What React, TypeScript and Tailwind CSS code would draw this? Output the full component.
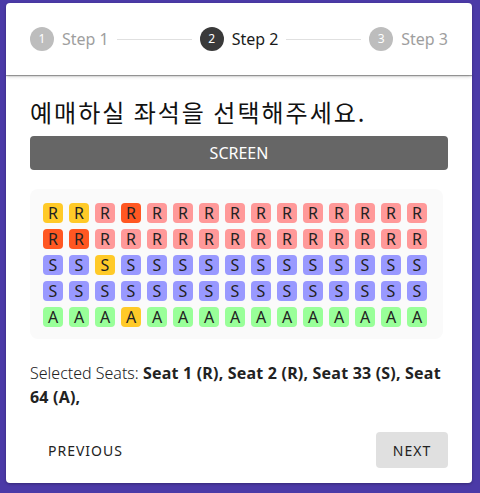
import React from "react";

const COLORS: Record<string, string> = {
  R: "bg-[#ff9999]",
  S: "bg-[#9999ff]",
  A: "bg-[#99ff99]",
};

const selected = new Set([1, 2, 33, 64]);
const reserved = new Set([4, 16, 17]);
const rowTypes = ["R", "R", "S", "S", "A"];

function seatClass(n: number, t: string) {
  if (selected.has(n)) return "bg-[#ffca28]";
  if (reserved.has(n)) return "bg-[#ff5722]";
  return COLORS[t];
}

function StepIcon({ n, active }: { n: number; active: boolean }) {
  return (
    <div
      className={`w-6 h-6 rounded-full flex items-center justify-center text-[12px] text-white ${
        active ? "bg-[#3a3a3a]" : "bg-[#bdbdbd]"
      }`}
    >
      {n}
    </div>
  );
}

export default function App() {
  const font = { fontFamily: '"Noto Sans", "Noto Sans CJK KR", sans-serif' };
  return (
    <div className="w-[480px] h-[493px] bg-[#4b3aa7] pt-[3px] pl-[6px]" style={font}>
      <div className="bg-white rounded-[4px] w-[466px] h-[480px] flex flex-col overflow-hidden shadow-[0_1px_3px_rgba(0,0,0,0.3)]">
        <div className="h-[72px] px-6 flex items-center relative z-10 shadow-[0_1px_1px_rgba(0,0,0,0.35),0_3px_3px_-1px_rgba(0,0,0,0.15)]">
          <div className="flex items-center">
            <StepIcon n={1} active={false} />
            <span className="ml-2 text-[16px] text-[#9e9e9e]">Step 1</span>
          </div>
          <div className="flex-1 mx-2 h-px bg-[#e0e0e0]" />
          <div className="flex items-center">
            <StepIcon n={2} active />
            <span className="ml-2 text-[16px] text-[#1a1a1a]">Step 2</span>
          </div>
          <div className="flex-1 mx-2 h-px bg-[#e0e0e0]" />
          <div className="flex items-center">
            <StepIcon n={3} active={false} />
            <span className="ml-2 text-[16px] text-[#9e9e9e]">Step 3</span>
          </div>
        </div>

        <div className="px-6 pt-[21px] flex flex-col">
          <h1
            className="text-[24px] leading-[32px] tracking-[2px] text-[#111]"
            style={{ fontFamily: '"Noto Sans CJK KR", "Noto Sans", sans-serif' }}
          >
            예매하실 좌석을 선택해주세요.
          </h1>
          <div className="mt-2 h-[34px] bg-[#666666] rounded-[4px] flex items-center justify-center text-white text-[16px]">
            SCREEN
          </div>

          <div className="mt-[19px] w-[413px] bg-[#fafafa] rounded-[8px] pl-[13px] pt-[14px] pb-[12px] flex flex-col gap-[6px]">
            {rowTypes.map((t, r) => (
              <div key={r} className="flex gap-[6px]">
                {Array.from({ length: 15 }, (_, i) => {
                  const n = r * 15 + i + 1;
                  return (
                    <div
                      key={i}
                      className={`w-5 h-5 rounded-[4px] flex items-center justify-center text-[16px] leading-none text-[#222] ${seatClass(n, t)}`}
                    >
                      {t}
                    </div>
                  );
                })}
              </div>
            ))}
          </div>

          <p className="mt-[22px] text-[16px] leading-[24px] text-[#222]">
            <span className="font-light">Selected Seats:</span>{" "}
            <span className="font-bold tracking-[0.2px]">Seat 1 (R), Seat 2 (R), Seat 33 (S), Seat 64 (A),</span>
          </p>

          <div className="mt-[23px] flex justify-between items-center">
            <button className="h-9 pl-[18px] pr-4 text-[14px] tracking-[0.07em] text-[#222] rounded-[4px]">
              PREVIOUS
            </button>
            <button className="h-9 w-[72px] text-[14px] tracking-[0.07em] text-[#222] bg-[#e0e0e0] rounded-[4px]">
              NEXT
            </button>
          </div>
        </div>
      </div>
    </div>
  );
}
